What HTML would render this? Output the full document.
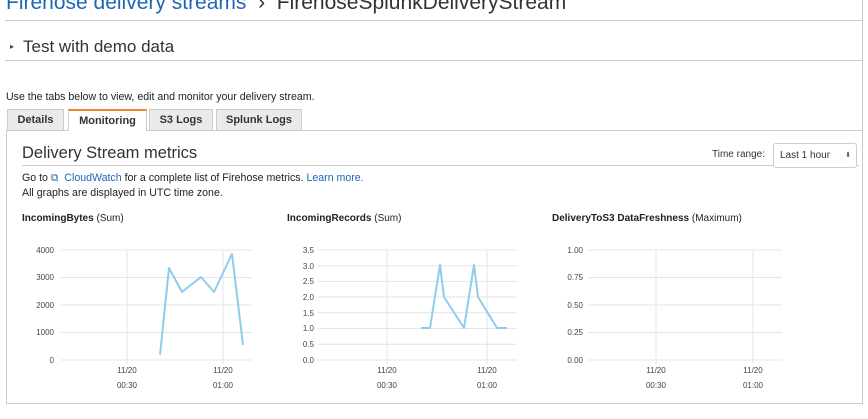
<!DOCTYPE html>
<html><head><meta charset="utf-8"><style>
body{margin:0;width:868px;height:419px;background:#fff;font-family:"Liberation Sans",Arial,sans-serif;position:relative;overflow:hidden;color:#333}
.a{position:absolute;white-space:nowrap}
.tab{position:absolute;top:109px;height:21px;background:#eaeaea;border:1px solid #ccc;border-bottom:none;font-size:11px;font-weight:bold;line-height:21px;text-align:center;color:#333;box-sizing:border-box}
svg text{font-family:"Liberation Sans",Arial,sans-serif;font-size:8px;fill:#444}
</style></head><body>
<div class="a" style="left:6px;top:-9px;font-size:21px;color:#1f66b5">Firehose delivery streams <span style="color:#333">&nbsp;›&nbsp; FirehoseSplunkDeliveryStream</span></div>
<div class="a" style="left:5px;top:20px;width:857px;border-top:1px solid #ccc"></div>
<div class="a" style="left:862px;top:0;height:405px;border-left:1px solid #ccc"></div>
<div class="a" style="left:10px;top:42px;font-size:8px;color:#444">▸</div>
<div class="a" style="left:23px;top:37px;font-size:17px;color:#333">Test with demo data</div>
<div class="a" style="left:5px;top:60px;width:857px;border-top:1px solid #ccc"></div>
<div class="a" style="left:6px;top:91px;font-size:10.6px;color:#222">Use the tabs below to view, edit and monitor your delivery stream.</div>
<div class="tab" style="left:7px;width:57px">Details</div>
<div class="tab" style="left:68px;width:79px;background:#fff;border-top:2px solid #e8882c;height:22px;z-index:2">Monitoring</div>
<div class="tab" style="left:149px;width:64px">S3 Logs</div>
<div class="tab" style="left:216px;width:86px">Splunk Logs</div>
<div class="a" style="left:6px;top:130px;width:856px;height:274px;border:1px solid #ccc;border-right:none;box-sizing:border-box"></div>
<div class="a" style="left:22px;top:144px;font-size:16.5px;color:#333">Delivery Stream metrics</div>
<div class="a" style="left:22px;top:165px;width:837px;border-top:1px solid #ccc"></div>
<div class="a" style="left:712px;top:149px;font-size:10px">Time range:</div>
<div class="a" style="left:773px;top:143px;width:84px;height:25px;border:1px solid #ccc;border-radius:3px;box-sizing:border-box;font-size:10px;line-height:23px;padding-left:6px;background:#fff">Last 1 hour<span style="position:absolute;right:5px;font-size:7px;color:#555">⬍</span></div>
<div class="a" style="left:22px;top:172px;font-size:10.6px;color:#222">Go to <span style="color:#1f66b5">⧉ &nbsp;CloudWatch</span> for a complete list of Firehose metrics. <span style="color:#1f66b5">Learn more.</span></div>
<div class="a" style="left:22px;top:187px;font-size:10.6px;color:#222">All graphs are displayed in UTC time zone.</div>
<div class="a" style="left:22px;top:213px;font-size:10px;color:#222"><b>IncomingBytes</b> (Sum)</div>
<div class="a" style="left:287px;top:213px;font-size:10px;color:#222"><b>IncomingRecords</b> (Sum)</div>
<div class="a" style="left:552px;top:213px;font-size:10px;color:#222"><b>DeliveryToS3 DataFreshness</b> (Maximum)</div>
<svg class="a" style="left:0;top:0" width="868" height="419">
<g stroke="#e4e4e4" stroke-width="1">
<line x1="61" x2="252" y1="250" y2="250"/><line x1="61" x2="252" y1="277.5" y2="277.5"/><line x1="61" x2="252" y1="305" y2="305"/><line x1="61" x2="252" y1="332.5" y2="332.5"/><line x1="61" x2="252" y1="360" y2="360"/>
<line x1="127" x2="127" y1="250" y2="364"/><line x1="223" x2="223" y1="250" y2="364"/>
<line x1="318" x2="517" y1="250" y2="250"/><line x1="318" x2="517" y1="265.7" y2="265.7"/><line x1="318" x2="517" y1="281.4" y2="281.4"/><line x1="318" x2="517" y1="297" y2="297"/><line x1="318" x2="517" y1="312.8" y2="312.8"/><line x1="318" x2="517" y1="328.5" y2="328.5"/><line x1="318" x2="517" y1="344.3" y2="344.3"/><line x1="318" x2="517" y1="360" y2="360"/>
<line x1="387" x2="387" y1="250" y2="364"/><line x1="487" x2="487" y1="250" y2="364"/>
<line x1="588" x2="782" y1="250" y2="250"/><line x1="588" x2="782" y1="277.5" y2="277.5"/><line x1="588" x2="782" y1="305" y2="305"/><line x1="588" x2="782" y1="332.5" y2="332.5"/><line x1="588" x2="782" y1="360" y2="360"/>
<line x1="656" x2="656" y1="250" y2="364"/><line x1="753" x2="753" y1="250" y2="364"/>
</g>
<g text-anchor="end">
<text x="54" y="253">4000</text><text x="54" y="280">3000</text><text x="54" y="308">2000</text><text x="54" y="335">1000</text><text x="54" y="363">0</text>
<text x="314" y="253">3.5</text><text x="314" y="269">3.0</text><text x="314" y="284">2.5</text><text x="314" y="300">2.0</text><text x="314" y="316">1.5</text><text x="314" y="331">1.0</text><text x="314" y="347">0.5</text><text x="314" y="363">0.0</text>
<text x="583" y="253">1.00</text><text x="583" y="280">0.75</text><text x="583" y="308">0.50</text><text x="583" y="335">0.25</text><text x="583" y="363">0.00</text>
</g>
<g text-anchor="middle">
<text x="127" y="373">11/20</text><text x="127" y="388">00:30</text><text x="223" y="373">11/20</text><text x="223" y="388">01:00</text>
<text x="387" y="373">11/20</text><text x="387" y="388">00:30</text><text x="487" y="373">11/20</text><text x="487" y="388">01:00</text>
<text x="656" y="373">11/20</text><text x="656" y="388">00:30</text><text x="753" y="373">11/20</text><text x="753" y="388">01:00</text>
</g>
<g fill="none" stroke="#8ecdea" stroke-width="2" stroke-linejoin="round">
<polyline points="160,355 169,268 182,292 201,277 214,292 232,254 243,345"/>
<polyline points="421,328 430,328 440,265 444,297 464,328 474,265 478,297 497,328 507,328"/>
</g>
</svg>
</body></html>
